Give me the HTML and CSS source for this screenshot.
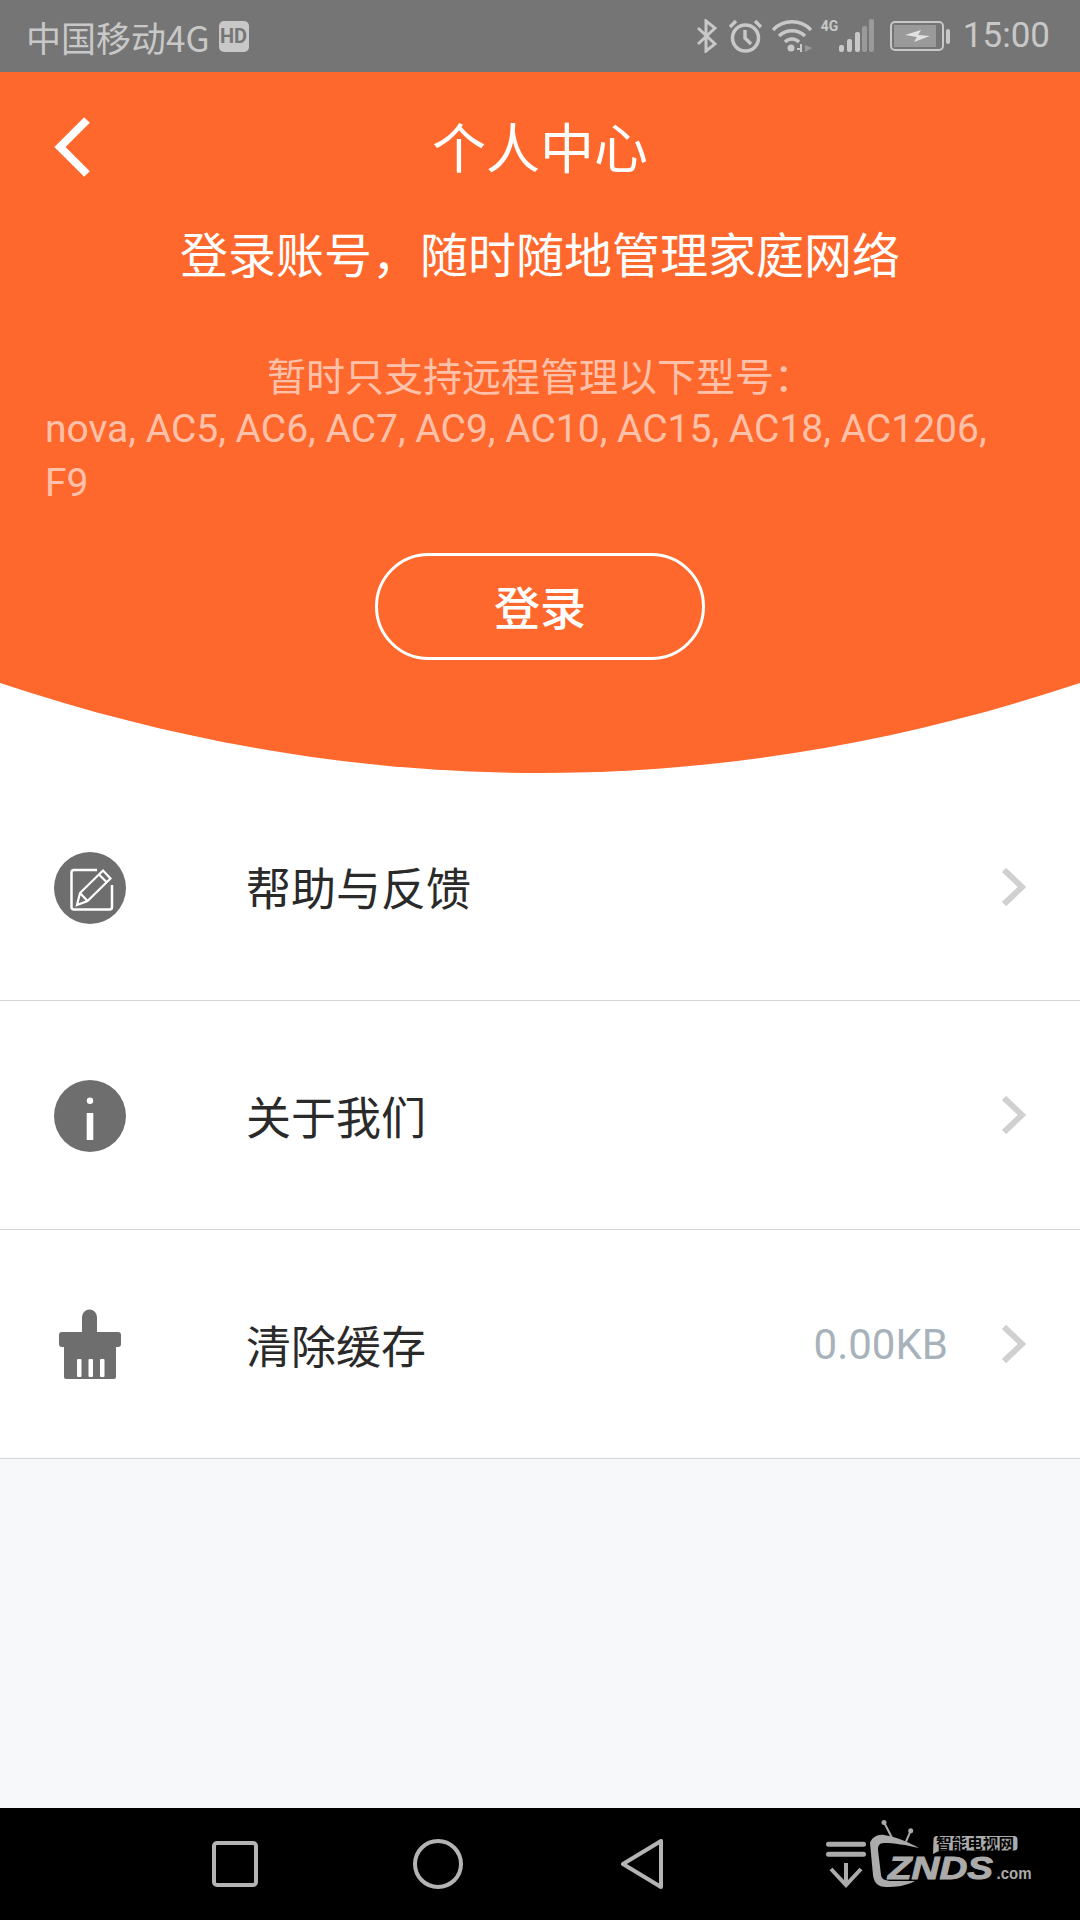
FILE: index.html
```html
<!DOCTYPE html>
<html lang="zh-CN">
<head>
    <meta charset="UTF-8">
    <meta name="viewport" content="width=device-width, initial-scale=1.0">
    <title>个人中心</title>
    <link rel="stylesheet" href="styles.css">
</head>
<body>
    <div class="status-bar">
        <div class="carrier">
            <span>中国移动4G</span>
            <span class="hd-badge">HD</span>
        </div>
        <div class="status-icons">
            <svg class="ic-bt" width="21" height="34" viewBox="0 0 21 34" fill="none" stroke="#c8c8c8" stroke-width="3">
                <path d="M2 9 L19 25 L10 32 V2 L19 9 L2 25"/>
            </svg>
            <svg class="ic-alarm" width="33" height="34" viewBox="0 0 33 34" fill="none" stroke="#c8c8c8" stroke-width="3.500">
                <circle cx="16.5" cy="19" r="13"/>
                <path d="M16 11 V19 L22 25"/>
                <path d="M1 8 L7 2 M26 2 L32 8"/>
            </svg>
            <svg class="ic-wifi" width="40" height="34" viewBox="0 0 40 34" fill="none" stroke="#c8c8c8" stroke-width="3.500">
                <path d="M1 11 C11 0 29 0 39 11"/>
                <path d="M7 17 C14 10 26 10 33 17"/>
                <path d="M13 23 C17 19 23 19 27 23"/>
                <circle cx="19" cy="29" r="3.500" fill="#c8c8c8" stroke="none"/>
                <path d="M25 30 H30 M29 33 V25" stroke-width="2"/>
                <path d="M33 33 V26 L40 29 Z" fill="#9a9a9a" stroke="none"/>
            </svg>
            <div class="signal">
                <span class="signal-4g">4G</span>
                <svg width="35" height="34" viewBox="0 0 35 34">
                    <rect x="0" y="26" width="5" height="7" rx="2" fill="#c8c8c8"/>
                    <rect x="8" y="20" width="5" height="13" rx="2" fill="#c8c8c8"/>
                    <rect x="16" y="13" width="5" height="20" rx="2" fill="#c8c8c8"/>
                    <rect x="23" y="7" width="5" height="26" rx="2" fill="#9a9a9a"/>
                    <rect x="30" y="0" width="5" height="33" rx="2" fill="#9a9a9a"/>
                </svg>
            </div>
            <svg class="ic-battery" width="61" height="30" viewBox="0 0 61 30">
                <rect x="1" y="1" width="52" height="28" rx="4" fill="none" stroke="#c8c8c8" stroke-width="2"/>
                <rect x="4" y="4" width="42" height="22" fill="#9a9a9a"/>
                <path d="M15 14 L31 9 L28 14 L40 15 L24 21 L27 16 Z" fill="#e2e2e2"/>
                <rect x="56" y="8" width="4" height="15" rx="2" fill="#c8c8c8"/>
            </svg>
            <span class="clock">15:00</span>
        </div>
    </div>

    <header class="account-header">
        <div class="top-row">
            <svg class="back-icon" width="36" height="60" viewBox="0 0 36 60" fill="none" stroke="#fff" stroke-width="8">
                <path d="M33 3 L6 30 L33 57"/>
            </svg>
            <h1>个人中心</h1>
        </div>
        <p class="headline">登录账号，随时随地管理家庭网络</p>
        <p class="note-title">暂时只支持远程管理以下型号：</p>
        <p class="note-models">nova, AC5, AC6, AC7, AC9, AC10, AC15, AC18, AC1206,<br>F9</p>
        <button class="login-button">登录</button>
    </header>
    <svg class="header-curve" width="1080" height="90" viewBox="0 0 1080 90" preserveAspectRatio="none">
        <path d="M0 0 H1080 C900 60 720 90 540 90 C360 90 180 60 0 0 Z" fill="#ff682c"/>
    </svg>

    <div class="menu">
        <div class="menu-row first">
            <svg class="row-icon" width="72" height="72" viewBox="0 0 72 72">
                <circle cx="36" cy="36" r="36" fill="#6e6e6e"/>
                <path d="M43 18 H20 Q17.500 18 17.500 20.500 V55 Q17.500 57.500 20 57.500 H55.500 Q58 57.500 58 55 V33" fill="none" stroke="#fff" stroke-width="2.500"/>
                <path d="M23 53 L26 41 L49 18.500 L56.500 26.500 L33.500 49 Z M45 22.500 L53 30.500 M26 41 L33.500 49" fill="none" stroke="#fff" stroke-width="2.200"/>
            </svg>
            <span class="row-label">帮助与反馈</span>
            <svg class="chevron" width="24" height="38" viewBox="0 0 24 38" fill="none" stroke="#d0d0d0" stroke-width="6">
                <path d="M2 2 L20 19 L2 36"/>
            </svg>
        </div>
        <div class="menu-row">
            <svg class="row-icon" width="72" height="72" viewBox="0 0 72 72">
                <circle cx="36" cy="36" r="36" fill="#6e6e6e"/>
                <circle cx="36" cy="20.700" r="3.200" fill="#fff"/>
                <rect x="32.700" y="33" width="6.600" height="27" fill="#fff"/>
            </svg>
            <span class="row-label">关于我们</span>
            <svg class="chevron" width="24" height="38" viewBox="0 0 24 38" fill="none" stroke="#d0d0d0" stroke-width="6">
                <path d="M2 2 L20 19 L2 36"/>
            </svg>
        </div>
        <div class="menu-row">
            <svg class="row-icon" width="72" height="72" viewBox="0 0 72 72">
                <path d="M28 23 V8 A7.500 7.500 0 0 1 43 8 V23 Z" fill="#6e6e6e"/>
                <rect x="5" y="23" width="62" height="15" rx="3" fill="#6e6e6e"/>
                <rect x="10" y="30" width="52" height="40" rx="2" fill="#6e6e6e"/>
                <rect x="23" y="50" width="4.500" height="18" rx="1" fill="#fff"/>
                <rect x="34.500" y="50" width="4.500" height="18" rx="1" fill="#fff"/>
                <rect x="46" y="50" width="4.500" height="18" rx="1" fill="#fff"/>
            </svg>
            <span class="row-label">清除缓存</span>
            <span class="row-value">0.00KB</span>
            <svg class="chevron" width="24" height="38" viewBox="0 0 24 38" fill="none" stroke="#d0d0d0" stroke-width="6">
                <path d="M2 2 L20 19 L2 36"/>
            </svg>
        </div>
    </div>

    <div class="spacer"></div>

    <nav class="nav-bar">
        <svg class="nav-square" width="46" height="46" viewBox="0 0 46 46" fill="none" stroke="#b4b4b4" stroke-width="4">
            <rect x="2" y="2" width="42" height="42" rx="3"/>
        </svg>
        <svg class="nav-circle" width="50" height="50" viewBox="0 0 50 50" fill="none" stroke="#b4b4b4" stroke-width="4">
            <circle cx="25" cy="25" r="23"/>
        </svg>
        <svg class="nav-back" width="42" height="50" viewBox="0 0 42 50" fill="none" stroke="#b4b4b4" stroke-width="4" stroke-linejoin="round">
            <path d="M40 2 V48 L2 25 Z"/>
        </svg>
        <svg class="nav-logo" width="216" height="76" viewBox="0 0 216 76">
            <rect x="0" y="21.700" width="40" height="5" rx="2.500" fill="#ababab"/>
            <rect x="0" y="31.700" width="40" height="5" rx="2.500" fill="#ababab"/>
            <path d="M20 43 V65 M5 49 L20 65 L35 49" fill="none" stroke="#ababab" stroke-width="4"/>
            <path d="M44 23 C46 17 52 14 58 15 C72 17 84 23 93 28 C80 25 68 23 58 23 C53 23 52 26 52 30 L55 55 C56 60 59 60 64 61 L89 61 C80 66 70 67 60 67 C52 67 48 63 47 55 Z" fill="#ababab"/>
            <path d="M58 2.300 L65.700 17.300 M84.700 10.700 L80 21.700" stroke="#ababab" stroke-width="2"/>
            <circle cx="58" cy="2.500" r="2.500" fill="#ababab"/>
            <circle cx="84.700" cy="10.700" r="2.500" fill="#ababab"/>
            <path d="M111 16 H188 Q191.500 16 191.500 19.500 V27 Q191.500 30.500 188 30.500 H114 L107 34 L107.500 19.500 Q107.500 16 111 16 Z" fill="#ababab"/>
            <text class="logo-cn" x="110" y="29" textLength="78" lengthAdjust="spacingAndGlyphs">智能电视网</text>
            <text class="logo-name" x="62" y="59" textLength="105" lengthAdjust="spacingAndGlyphs">ZNDS</text>
            <text class="logo-com" x="170.500" y="59" textLength="35" lengthAdjust="spacingAndGlyphs">.com</text>
        </svg>
    </nav>
</body>
</html>
```

FILE: styles.css
```css
* {
    box-sizing: border-box;
}
body {
    margin: 0;
    width: 1080px;
    height: 1920px;
    display: flex;
    flex-direction: column;
    background-color: #f7f8fa;
    font-family: 'Roboto', 'Noto Sans CJK SC', sans-serif;
    overflow: hidden;
}
svg {
    display: block;
    flex-shrink: 0;
}

/* status bar */
.status-bar {
    height: 72px;
    flex-shrink: 0;
    background: #757575;
    color: #c8c8c8;
    display: flex;
    justify-content: space-between;
    align-items: center;
    padding: 0 30px 0 26px;
}
.carrier {
    display: flex;
    align-items: center;
    gap: 9px;
    font-size: 35px;
    font-family: 'Noto Sans CJK SC', sans-serif;
}
.hd-badge {
    width: 30px;
    height: 31px;
    border-radius: 5px;
    background: #c8c8c8;
    color: #757575;
    font: bold 20px 'Roboto', sans-serif;
    display: flex;
    align-items: center;
    justify-content: center;
}
.status-icons {
    display: flex;
    align-items: center;
}
.ic-alarm {
    margin-left: 12px;
}
.ic-wifi {
    margin-left: 10px;
}
.signal {
    display: flex;
    margin-left: 9px;
}
.signal-4g {
    width: 18px;
    font: bold 14px/14px 'Roboto', sans-serif;
}
.ic-battery {
    margin-left: 16px;
}
.clock {
    margin-left: 12px;
    font-size: 35px;
    line-height: 42px;
}

/* orange header */
.account-header {
    height: 611px;
    flex-shrink: 0;
    background: #ff682c;
    color: #fff;
    display: flex;
    flex-direction: column;
    align-items: center;
}
.top-row {
    position: relative;
    width: 100%;
    height: 76px;
    margin-top: 36px;
    text-align: center;
}
.back-icon {
    position: absolute;
    left: 54px;
    top: 9px;
}
h1 {
    margin: 0;
    font-size: 54px;
    font-weight: 400;
    line-height: 76px;
    font-family: 'Noto Sans CJK SC', sans-serif;
}
.headline {
    margin: 34px 0 0;
    font-size: 48px;
    line-height: 68px;
    font-family: 'Noto Sans CJK SC', sans-serif;
}
.note-title {
    margin: 60px 0 0;
    font-size: 39px;
    line-height: 56px;
    color: rgba(255, 255, 255, 0.6);
    font-family: 'Noto Sans CJK SC', sans-serif;
}
.note-models {
    align-self: stretch;
    margin: 0;
    padding-left: 45px;
    font-size: 39px;
    line-height: 54px;
    white-space: nowrap;
    color: rgba(255, 255, 255, 0.6);
}
.login-button {
    width: 330px;
    height: 107px;
    margin-top: 43px;
    padding-bottom: 4px;
    background: transparent;
    border: 3px solid #fff;
    border-radius: 54px;
    color: #fff;
    font-size: 46px;
    font-weight: 500;
    font-family: 'Noto Sans CJK SC', sans-serif;
}
.header-curve {
    background: #fff;
}

/* menu list */
.menu {
    background: #fff;
}
.menu-row {
    height: 229px;
    display: flex;
    align-items: center;
    padding: 0 54px;
    border-bottom: 1px solid #d4d4d4;
}
.menu-row.first {
    height: 228px;
}
.row-icon {
    margin: 2px 120px 0 0;
}
.row-label {
    font-size: 45px;
    color: #2a2a2a;
    font-family: 'Noto Sans CJK SC', sans-serif;
}
.row-value {
    margin-left: auto;
    font-size: 42px;
    color: #a8b2ba;
}
.chevron {
    margin-left: auto;
}
.row-value + .chevron {
    margin-left: 54px;
}
.spacer {
    flex: 1;
}

/* bottom nav */
.nav-bar {
    height: 112px;
    flex-shrink: 0;
    background: #000;
    display: flex;
    align-items: center;
    padding-left: 212px;
}
.nav-circle {
    margin-left: 155px;
}
.nav-back {
    margin-left: 158px;
}
.nav-logo {
    align-self: flex-start;
    margin: 12px 0 0 163px;
}
.logo-cn {
    font: bold 15px 'Noto Sans CJK SC', sans-serif;
    fill: #000;
}
.logo-name {
    font: italic bold 32px 'Liberation Sans', sans-serif;
    fill: #ababab;
    stroke: #ababab;
    stroke-width: 1px;
}
.logo-com {
    font: bold 17px 'Liberation Sans', sans-serif;
    fill: #ababab;
}
```
